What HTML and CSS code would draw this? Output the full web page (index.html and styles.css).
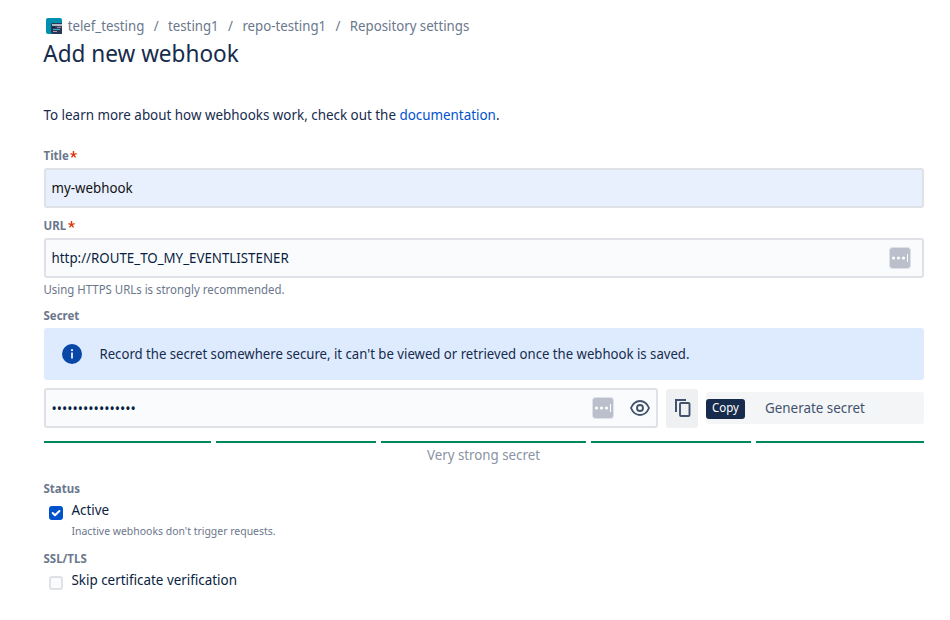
FILE: index.html
```html
<!DOCTYPE html>
<html lang="en">
<head>
<meta charset="utf-8">
<title>Add new webhook</title>
<link rel="stylesheet" href="styles.css">
</head>
<body>
<main class="page">
  <nav class="breadcrumbs">
    <svg class="avatar" width="16" height="16" viewBox="0 0 16 16">
      <rect width="16" height="16" rx="2" fill="#0090ad"/>
      <path d="M5 6.5Q5 5 6.5 5H16v11H7Q5 16 5 14z" fill="#253858"/>
      <path d="M6 7h10" stroke="#fff" stroke-width="1.3"/>
      <path d="M11 9.3h4M7 13.5h4" stroke="#d3909a"/>
      <path d="M7 11.4h7" stroke="#4bb5d6"/>
      <path d="M6 9.3h3" stroke="#091e42"/>
    </svg>
    <span class="crumbs fit"><span>telef_testing</span><i>/</i><span>testing1</span><i>/</i><span>repo-testing1</span><i>/</i><span>Repository settings</span></span>
  </nav>
  <h1><span class="fit">Add new webhook</span></h1>
  <p class="intro"><span class="fit wide">To learn more about how webhooks work, check out the <a>documentation</a>.</span></p>

  <div class="label"><span class="fit wide">Title</span><svg class="star" width="7" height="7" viewBox="0 0 7 7"><path d="M3.5 0v3.6M.4 2.6l3.1 1 3.1-1M1.5 6.4l2-2.8 2 2.8"/></svg></div>
  <div class="field autofill"><span class="fit">my-webhook</span></div>

  <div class="label"><span class="fit wide">URL</span><svg class="star" width="7" height="7" viewBox="0 0 7 7"><path d="M3.5 0v3.6M.4 2.6l3.1 1 3.1-1M1.5 6.4l2-2.8 2 2.8"/></svg></div>
  <div class="field url"><span class="fit">http://ROUTE_TO_MY_EVENTLISTENER</span>
    <svg class="manager" width="22" height="22" viewBox="0 0 22 22"><rect x=".5" y=".5" width="21" height="21" rx="3" fill="#babfcb" stroke="#dfe1e8"/><g fill="#fff"><circle cx="4.5" cy="11" r="1.6"/><circle cx="9.5" cy="11" r="1.6"/><circle cx="14.5" cy="11" r="1.6"/><path d="M18 7h1v8h-1z"/></g></svg>
  </div>
  <div class="help"><span class="fit">Using HTTPS URLs is strongly recommended.</span></div>

  <div class="label secret-label"><span class="fit wide">Secret</span></div>
  <div class="banner">
    <svg width="20" height="20" viewBox="0 0 20 20"><circle cx="10" cy="10" r="10" fill="#0747a6"/><circle cx="10" cy="6.2" r="1.1" fill="#deebff"/><path d="M10 8.5v6" stroke="#deebff" stroke-width="1.9"/></svg>
    <span class="fit">Record the secret somewhere secure, it can't be viewed or retrieved once the webhook is saved.</span>
  </div>
  <div class="secret-row">
    <div class="field password"><span class="dots">••••••••••••••••</span>
      <svg class="manager" width="22" height="22" viewBox="0 0 22 22"><rect x=".5" y=".5" width="21" height="21" rx="3" fill="#babfcb" stroke="#dfe1e8"/><g fill="#fff"><circle cx="4.5" cy="11" r="1.6"/><circle cx="9.5" cy="11" r="1.6"/><circle cx="14.5" cy="11" r="1.6"/><path d="M18 7h1v8h-1z"/></g></svg>
      <svg class="eye" width="20" height="16" viewBox="0 0 20 16" fill="none" stroke="#42526e" stroke-width="1.9"><path d="M1 8Q4 1 10 1t9 7q-3 7-9 7T1 8z"/><circle cx="10" cy="8" r="3"/></svg>
    </div>
    <div class="copy"><svg width="16" height="18" viewBox="0 0 16 18" fill="none" stroke="#42526e" stroke-width="2"><path d="M1 13V1h10"/><rect x="5" y="4" width="9.5" height="13" rx="1" stroke-width="1.9"/></svg></div>
    <div class="generate"><span class="tip"><span class="fit wide">Copy</span></span><span class="fit wide">Generate secret</span></div>
  </div>
  <div class="strength"><b></b><b></b><b></b><b></b><b></b></div>
  <div class="strength-text"><span class="fit">Very strong secret</span></div>

  <div class="label status-label"><span class="fit wide">Status</span></div>
  <div class="check"><span class="box on"><svg width="10" height="10" viewBox="0 0 10 10"><path d="M1.7 5l2.3 2.3L8.4 3" fill="none" stroke="#fff" stroke-width="2" stroke-linecap="round" stroke-linejoin="round"/></svg></span><span class="fit wide">Active</span></div>
  <div class="note"><span class="fit">Inactive webhooks don't trigger requests.</span></div>
  <div class="label"><span class="fit wide">SSL/TLS</span></div>
  <div class="check"><span class="box"></span><span class="fit wide">Skip certificate verification</span></div>
</main>
</body>
</html>
```
FILE: styles.css
```css
* { box-sizing: border-box; }
body {
  margin: 0;
  background: #fff;
  color: #172b4d;
  font: 14px/20px "Noto Sans", "Open Sans", sans-serif;
}
.page { width: 880px; margin-left: 44px; padding-top: 16px; }
.fit { display: inline-block; margin-left: -1px; white-space: pre; transform: translateX(.5px) scaleX(.944); transform-origin: 0 50%; }
.fit.wide { transform: translateX(.5px) scaleX(.957); }
.breadcrumbs { display: flex; align-items: center; height: 20px; padding-left: 2px; color: #6b778c; }
.avatar { margin-right: 6px; }
.breadcrumbs .crumbs { display: flex; transform: translateX(.7px) scaleX(.945); }
.crumbs i { width: 25.1px; text-align: center; font-style: normal; }
h1 { margin: 0; height: 34px; font-size: 24px; font-weight: 400; line-height: 34px; }
h1 .fit { transform: translateX(.3px) scaleX(.94); }
.intro { margin: 35px 0 0; height: 20px; }
.intro a { color: #0052cc; }
.label { display: flex; align-items: center; height: 20px; color: #6b778c; font-size: 12px; font-weight: 700; }
.intro + .label { margin-top: 21px; }
.star { margin: -3px 0 0 1px; fill: none; stroke: #de350b; stroke-width: 1.4; }
.field {
  display: flex;
  align-items: center;
  height: 40px;
  padding: 0 5px;
  border: 2px solid #dfe1e6;
  border-radius: 3px;
  background: #fafbfc;
  color: #091e42;
}
.field .fit { margin-left: 0; transform: translateX(.6px) scaleX(.95); }
.autofill { background: #e8f0fe; color: #111; }
.autofill + .label { margin-top: 8px; }
.label + .field { margin-top: 2px; }
.manager { margin-left: auto; }
.url .manager { margin-right: 6px; }
.help { height: 20px; margin-top: 2px; color: #6b778c; font-size: 12px; }
.help .fit { transform: translateX(.5px) scaleX(.951); }
.secret-label { margin-top: 6px; }
.banner {
  display: flex;
  align-items: center;
  gap: 18px;
  height: 52px;
  margin-top: 2px;
  padding-left: 18px;
  border-radius: 3px;
  background: #deebff;
}
.banner .fit { transform: translateX(.5px) scaleX(.94); }
.secret-row { display: grid; grid-template-columns: 614px 32px 218px; gap: 8px; align-items: center; margin-top: 8px; }
.dots { margin: 1px 0 0 .5px; font-size: 14px; }
.eye { margin: 0 1px 0 16px; }
.copy { display: flex; align-items: center; justify-content: center; height: 39px; padding-left: 1px; border-radius: 3px; background: #eff0f1; }
.generate { display: flex; align-items: center; height: 32px; border-radius: 3px; background: #f4f5f7; color: #42526e; }
.tip { width: 39px; height: 20px; margin: 1px 20px 0 0; padding-left: 6px; border-radius: 3px; background: #172b4d; color: #fff; font-size: 12px; line-height: 18px; }
.generate .fit { margin-left: 0; transform: scaleX(.957); }
.strength { display: grid; grid-template-columns: 167px 160px 205px 160px 168px; gap: 5px; height: 2px; margin-top: 13px; }
.strength b { background: #00875a; }
.strength-text { height: 20px; margin-top: 2px; color: #8993a4; text-align: center; }
.strength-text .fit { margin-left: -2px; transform: scaleX(.95); transform-origin: 50%; }
.status-label { margin-top: 14px; }
.check { display: flex; align-items: center; height: 20px; margin-top: 1px; padding-left: 5px; color: #091e42; }
.box { width: 14px; height: 14px; margin: 6px 9px 0 0; border: 2px solid #dfe1e6; border-radius: 3px; background: #fafbfc; }
.box.on { border-color: #0052cc; background: #0052cc; }
.box svg { display: block; }
.note { height: 20px; margin: 1px 0 8px 28px; color: #6b778c; font-size: 11px; }
.note .fit { transform: translateX(.5px) scaleX(.95); }
```
